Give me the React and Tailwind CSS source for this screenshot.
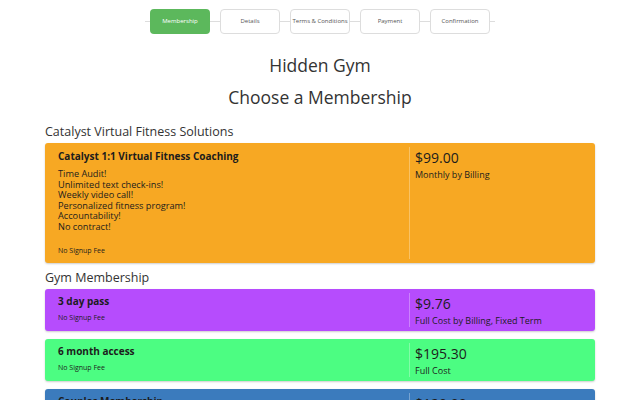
import React from "react";

const steps = ["Membership", "Details", "Terms & Conditions", "Payment", "Confirmation"];

const groups = [
  {
    name: "Catalyst Virtual Fitness Solutions",
    plans: [
      {
        title: "Catalyst 1:1 Virtual Fitness Coaching",
        perks: [
          "Time Audit!",
          "Unlimited text check-ins!",
          "Weekly video call!",
          "Personalized fitness program!",
          "Accountability!",
          "No contract!",
        ],
        price: "$99.00",
        terms: "Monthly by Billing",
        bg: "bg-[#f7a823]",
      },
    ],
  },
  {
    name: "Gym Membership",
    plans: [
      { title: "3 day pass", price: "$9.76", terms: "Full Cost by Billing, Fixed Term", bg: "bg-[#b64cfd]" },
      { title: "6 month access", price: "$195.30", terms: "Full Cost", bg: "bg-[#4cfd82]" },
      { title: "Couples Membership", price: "$120.00", terms: "Monthly by Billing", bg: "bg-[#3b7bbd]" },
    ],
  },
];

function Stepper() {
  return (
    <div className="flex items-center justify-center pt-[9px]">
      <div className="w-[5px] h-px bg-[#ddd]" />
      {steps.map((s, i) => (
        <React.Fragment key={s}>
          <div
            className={
              i === 0
                ? "w-[60px] h-[25px] rounded-[4px] bg-[#5cb85c] text-white text-[6px] flex items-center justify-center"
                : "w-[60px] h-[25px] rounded-[4px] bg-white border border-[#ddd] text-[#555] text-[6px] flex items-center justify-center"
            }
          >
            {s}
          </div>
          <div className={i === steps.length - 1 ? "w-[5px] h-px bg-[#ddd]" : "w-[10px] h-px bg-[#ddd]"} />
        </React.Fragment>
      ))}
    </div>
  );
}

function PlanCard({ plan }) {
  return (
    <div className={`${plan.bg} rounded-[3px] shadow-[0_1px_2px_rgba(0,0,0,0.2)] flex text-[#1c1c1c]`}>
      <div className={plan.perks ? "w-[364px] pl-[13px] pt-[6px] pb-[7px]" : "w-[364px] pl-[13px] pt-[5px] pb-[8px]"}>
        <div className="text-[10px] font-bold leading-[15px]">{plan.title}</div>
        {plan.perks && (
          <div className="mt-[5px] text-[9.2px] leading-[10.6px]">
            {plan.perks.map((p) => (
              <div key={p}>{p}</div>
            ))}
          </div>
        )}
        <div className={plan.perks ? "mt-[13px] text-[7px] leading-[10px]" : "mt-[4px] text-[7px] leading-[10px]"}>
          No Signup Fee
        </div>
      </div>
      <div className="flex-1 my-1 border-l border-white/30 pl-[5px] pt-[2px]">
        <div className="text-[14px] leading-[18px]">{plan.price}</div>
        <div className="mt-[2px] text-[9px] leading-[12px]">{plan.terms}</div>
      </div>
    </div>
  );
}

export default function App() {
  return (
    <div className="w-[640px] h-[400px] overflow-hidden bg-white font-['Open_Sans',sans-serif] text-[#333]">
      <Stepper />
      <h1 className="mt-[17px] text-center text-[17.5px] leading-[28px]">Hidden Gym</h1>
      <h2 className="mt-[4px] text-center text-[17.5px] leading-[28px]">Choose a Membership</h2>

      <div className="px-[45px]">
        {groups.map((g, gi) => (
          <div key={g.name} className={gi === 0 ? "mt-[11px]" : "mt-[5px]"}>
            <div className="text-[12.5px] leading-[20px]">{g.name}</div>
            <div className="mt-px flex flex-col gap-[8px]">
              {g.plans.map((p) => (
                <PlanCard key={p.title} plan={p} />
              ))}
            </div>
          </div>
        ))}
      </div>
    </div>
  );
}
